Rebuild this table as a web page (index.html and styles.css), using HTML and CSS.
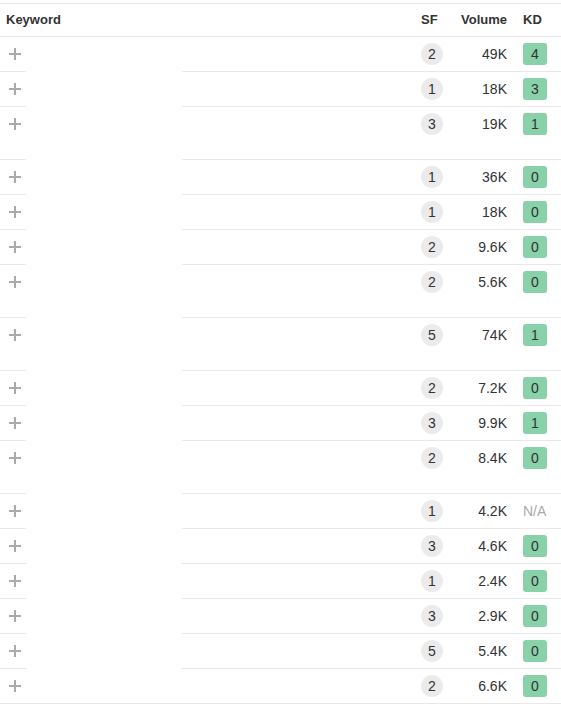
FILE: index.html
```html
<!DOCTYPE html>
<html>
<head>
<meta charset="utf-8">
<link rel="stylesheet" href="styles.css">
</head>
<body>
<div class="table">
  <div class="row head">
    <div class="c kw-h">Keyword</div>
    <div class="c sf">SF</div>
    <div class="c vol">Volume</div>
    <div class="c kd">KD</div>
  </div>
  <div id="body"></div>
</div>
<script src="app.js"></script>
</body>
</html>
```
FILE: styles.css
```css
html, body { margin: 0; padding: 0; background: #fff; }
body {
  font-family: "Liberation Sans", Arial, sans-serif;
  color: #333;
  width: 561px;
}
.table { padding-top: 3px; }
.row {
  display: grid;
  grid-template-columns: 26px 156px 228px 44px 59px 48px;
}
.c { border-bottom: 1px solid #e8e8e8; }
.row .gap { border-bottom-color: transparent; }
.row.last .gap { border-bottom-color: #e8e8e8; }
.head {
  border-top: 1px solid #e8e8e8;
  font-weight: bold;
  font-size: 13px;
}
.head .c { height: 32px; line-height: 32px; }
.head .kw-h { grid-column: 1 / 4; padding-left: 6px; }
.head .sf { padding-left: 11px; }
.head .vol { text-align: right; padding-right: 6px; }
.head .kd { padding-left: 10px; }

.body-row { font-size: 14px; }
.body-row .c { height: 52px; box-sizing: border-box; height: 35px; }
.body-row.tall .c { height: 53px; }
.plus { padding: 11px 0 0 9px; }
.plus svg { display: block; }
.sf-cell { padding: 6px 0 0 11px; }
.circle {
  width: 22px; height: 22px; border-radius: 50%;
  background: #ebebeb; text-align: center; line-height: 22px;
}
.vol-cell { padding: 6px 6px 0 0; text-align: right; line-height: 22px; }
.kd-cell { padding: 6px 0 0 10px; line-height: 22px; }
.kd-badge {
  width: 24px; height: 22px; border-radius: 3px;
  background: #88d1a9; text-align: center; line-height: 22px;
}
.na { color: #aaa; }
```
FILE: app.js
```js
var data = [
  [2,"49K","4",0],[1,"18K","3",0],[3,"19K","1",1],[1,"36K","0",0],
  [1,"18K","0",0],[2,"9.6K","0",0],[2,"5.6K","0",1],[5,"74K","1",1],
  [2,"7.2K","0",0],[3,"9.9K","1",0],[2,"8.4K","0",1],[1,"4.2K","N/A",0],
  [3,"4.6K","0",0],[1,"2.4K","0",0],[3,"2.9K","0",0],[5,"5.4K","0",0],
  [2,"6.6K","0",0]
];
var host = document.getElementById("body");
data.forEach(function (d, i) {
  var r = document.createElement("div");
  r.className = "row body-row" + (d[3] ? " tall" : "") + (i === data.length - 1 ? " last" : "");
  var kd = d[2] === "N/A" ? '<span class="na">N/A</span>' : '<div class="kd-badge">' + d[2] + '</div>';
  r.innerHTML =
    '<div class="c plus"><svg width="12" height="12" viewBox="0 0 12 12"><rect x="0" y="5" width="12" height="2" fill="#aaa"/><rect x="5" y="0" width="2" height="12" fill="#aaa"/></svg></div>' +
    '<div class="c gap"></div>' +
    '<div class="c"></div>' +
    '<div class="c sf-cell"><div class="circle">' + d[0] + '</div></div>' +
    '<div class="c vol-cell">' + d[1] + '</div>' +
    '<div class="c kd-cell">' + kd + '</div>';
  host.appendChild(r);
});
```
